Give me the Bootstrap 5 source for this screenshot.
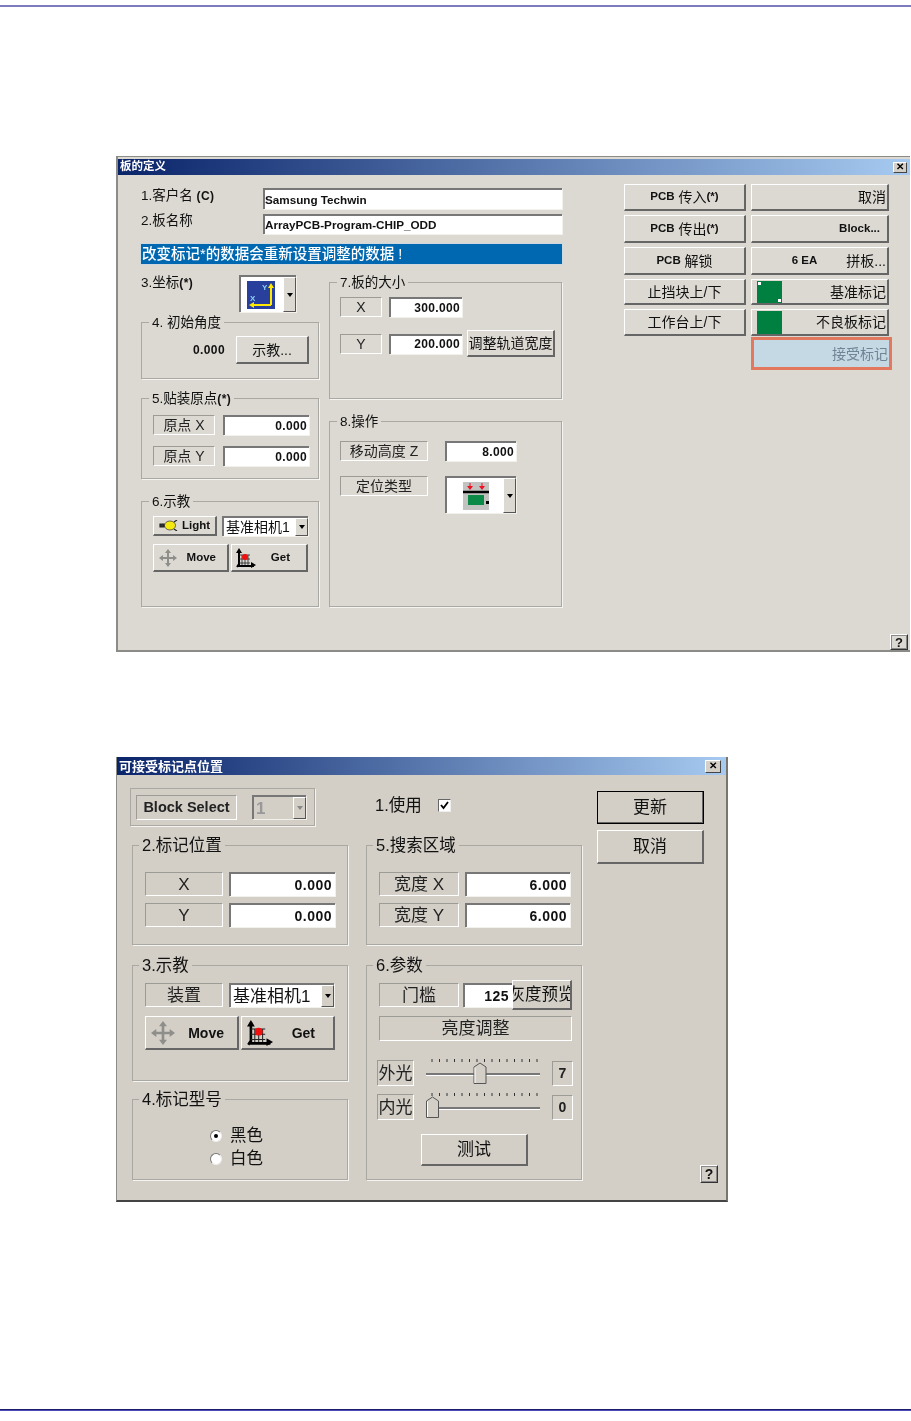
<!DOCTYPE html>
<html lang="zh"><head><meta charset="utf-8"><title>板的定义</title>
<link href="https://cdn.jsdelivr.net/npm/bootstrap@5.3.0/dist/css/bootstrap.min.css" rel="stylesheet">
<script src="https://cdn.jsdelivr.net/npm/bootstrap@5.3.0/dist/js/bootstrap.bundle.min.js"></script>
<style>
html,body{margin:0;background:#fff;overflow:hidden}
body{width:911px;height:1421px;font-family:"Liberation Sans","Noto Sans CJK SC",sans-serif;color:#111;font-size:13.5px;line-height:1}
.rule-top{height:2px;margin-top:5px;background:#7b7bbd}
.rule-bot{height:2px;margin-top:207px;background:linear-gradient(#1b1b6b 50%,#4b4bb5 50%)}
.dlg{margin-left:116px;box-sizing:border-box;filter:blur(.35px);position:relative}
.d1{margin-top:149px;width:794px;height:496px;background:#dcd9d2;border:1px solid #8b8b88;border-left-width:2px;border-bottom-width:2px;padding-top:2px;border-right:0;--bg:#dcd9d2}
.d2{margin-top:105px;width:612px;height:445px;background:#d3cfc7;border-left:1px solid #8b8b88;border-right:2px solid #77766f;border-bottom:2px solid #444;--bg:#d3cfc7}
.ttl{height:16px;padding:0 2px;color:#fff;font-weight:700;font-size:11.5px;background:linear-gradient(90deg,#0a246a,#a6caf0);white-space:nowrap}
.d2 .ttl{height:18px;font-size:13px}
.xbtn{width:14px;height:11px;background:#d4d0c8;border:1px solid;border-color:#fff #444 #444 #fff;color:#000;font-size:10px;margin-right:1px}
.d2 .xbtn{width:16px;height:13px;margin-right:3px}
.gbx{position:relative;border:1px solid #a9a8a2;box-shadow:1px 1px 0 #f5f4f0;box-sizing:border-box}
.glg{position:absolute;left:7px;top:-9px;background:var(--bg);padding:0 3px;font-size:13.5px;white-space:nowrap;line-height:17px}
.d2 .glg{font-size:16.5px;top:-11px;line-height:20px;left:6px}
.lb3d{display:flex;align-items:center;justify-content:center;box-sizing:border-box;border:1px solid;border-color:#9c9b95 #fff #fff #9c9b95;white-space:nowrap;font-size:14px;color:#222}
.d2 .lb3d{font-size:17px}
.form-control.fld{box-sizing:border-box;padding:0 2px 1px;min-height:0;background:#fff;border-style:solid;border-width:2px 0 0 2px;border-color:#777;border-radius:0;font-size:12px;font-weight:700;color:#111;line-height:1;box-shadow:1px 1px 0 #f2f1ec;letter-spacing:.35px}
.form-control.fld.txt{font-size:11.7px;letter-spacing:0;padding-left:0}
.d2 .form-control.fld{font-size:14px;letter-spacing:.5px;padding-right:3px}
.btn.wbtn{display:flex;align-items:center;justify-content:center;box-sizing:border-box;padding:0;background:var(--bg);border-style:solid;border-width:1px 2px 2px 1px;border-color:#fff #666 #666 #fff;border-radius:0;color:#111;font-size:14px;line-height:1;white-space:nowrap;overflow:hidden}
.d2 .btn.wbtn{font-size:17px}
.btn.wbtn b{font-size:11.5px}
.d2 .btn.wbtn b{font-size:14px}
.btn.wbtn.r-al{justify-content:flex-end;padding-right:1px}
.btn.wbtn.r-b8{padding-right:7px}
.btn.wbtn.spread{justify-content:space-between}
.sp-a{padding:0 11px 0 5px!important}.sp-b{padding:0 16px 0 4px!important}.sp-c{padding:0 13px 0 5px!important}.sp-d{padding:0 18px 0 5px!important}
.gap31{margin-left:29px}
.cmb{display:flex;box-sizing:border-box;background:#fff;border-style:solid;border-width:2px 0 0 2px;border-color:#777;box-shadow:1px 1px 0 #f2f1ec;overflow:hidden}
.cmb .cv{flex:1;display:flex;align-items:center;padding-left:2px;white-space:nowrap;font-size:14px;overflow:hidden}
.cmb .cv.ico{padding-left:6px}
.d2 .cmb .cv{font-size:17px}
.arr{width:13px;background:var(--bg);border:1px solid;border-color:#fff #555 #555 #fff;display:flex;align-items:center;justify-content:center;flex:none}
.arr::after{content:"";border:3.5px solid transparent;border-top:4px solid #000;border-bottom:0}
.dis .arr::after{border-top-color:#888}
.dis{background:var(--bg)}
.dis .cv{color:#999;font-weight:700}
/* sizes */
.pl23{padding-left:23px}.pw421{width:421px}.pt13{padding-top:13px}.pt9{padding-top:9px}.ml62{margin-left:62px}.pt1x{padding-top:1px}
.lab1{width:122px;flex:none;font-size:13.5px}
.h21{height:21px}.h20{height:20px}.h24{height:24px}.h25{height:25px}.h27{height:27px}.h28{height:28px}.h30{height:30px}.h34{height:34px}.h37{height:37px}
.mt5{margin-top:5px}.mt7{margin-top:7px}.mt8{margin-top:8px}.mt9{margin-top:9px}.mt10{margin-top:10px}.mt11{margin-top:11px}.mt13{margin-top:13px}.mt15{margin-top:15px}.mt16{margin-top:16px}.mt18{margin-top:18px}.mt19{margin-top:19px}.mt20{margin-top:20px}.mt22{margin-top:22px}.mt6{margin-top:6px}
.banner{height:20px;background:#0068b0;color:#fff;font-size:14.5px;font-weight:500;padding-left:1px;display:flex;align-items:center;box-shadow:0 0 0 1px #cfd8dd}
.gL{width:178px}.gR{width:233px}.gap10{gap:10px}
.co1{width:98px}.cmb57{width:57px}
.g4{height:57px;padding:13px 9px 0 0}.g7{height:117px;padding:14px 0 0 10px}.g5{height:81px;padding:16px 0 0 11px}.g6{height:106px;padding:14px 0 0 11px}.g8{height:186px;padding:19px 0 0 10px}
.w42{width:42px}.w73{width:73px}.w88{width:88px}.w62{width:62px}.w86{width:86px}.w64{width:64px}.w76{width:76px}.w77{width:77px}.w71{width:71px}.g7px{gap:7px}.g8px{gap:8px}.g5px{gap:5px}.g17px{gap:17px}.g2px{gap:2px}.g11px{gap:11px}
.boldn{font-size:12px;font-weight:700;letter-spacing:.4px}
.rgrid{display:grid;grid-template-columns:122px 138px;grid-template-rows:27px 28px 28px 26px 27px 33px;gap:4px 5px}
.grn{width:25px;align-self:stretch;background:#008040;position:relative;flex:none;margin:1px auto 0 5px}
.grn.dots::before,.grn.dots::after{content:"";position:absolute;width:3px;height:3px;background:#fff}
.grn.dots::before{left:1px;top:1px}.grn.dots::after{right:1px;bottom:1px}
.btn.wbtn.acc{margin-top:-3px;width:141px;background:#c5d9e5;border:3px solid #e2795f;color:#6f8494;height:33px}
.helpr{margin-top:27px}
.btn.wbtn.help{width:18px;height:16px;font-size:13px;font-weight:700;border:1px solid;border-color:#fff #333 #333 #fff;outline:1px solid #888;outline-offset:-2px}
.d2 .btn.wbtn.help{font-size:14px;height:18px}
.pr0{margin-right:2px}
/* dialog 2 */
.a-col{width:216px;margin-left:15px}.b-col{width:216px;margin-left:18px}.c-col{width:107px;margin-left:15px}
.blk{width:185px;height:38px;margin-left:-2px;padding:6px 0 0 5px}
.blk .lb3d{width:101px;height:25px;font-size:14.5px;font-weight:700}
.cmb54{width:54px;height:24px;margin-left:15px}
.use{height:38px;padding-left:9px;font-size:16.5px;gap:16px;padding-bottom:4px}
.chk{width:13px;height:13px;background:#fff;border:1px solid;border-color:#666 #eee #eee #666;display:block;flex:none}
.g2b{height:100px;padding:26px 0 0 12px}.g5b{height:100px;padding:26px 0 0 12px}.g3b{height:116px;padding:17px 0 0 12px}.g4b{height:81px;padding:24px 0 0 77px}.g6b{height:215px;padding:14px 0 0 12px}
.w78{width:78px}.w106{width:106px}.w80{width:80px}.w105{width:105px}.w94{width:94px}.w49{width:49px}.w60{width:60px}.w193{width:193px}.w37{width:37px}.w21{width:21px}.w107{width:107px}.g6px{gap:6px}.g12px{gap:12px}
.shl{margin-left:-2px}
.rad{width:12px;height:12px;border-radius:50%;background:#fff;border:1px solid;border-color:#777 #eee #eee #777;display:flex;align-items:center;justify-content:center;flex:none}
.rad.on::after{content:"";width:4px;height:4px;border-radius:50%;background:#000}
.rrow{height:23px;font-size:16.5px;gap:8px}
.tst{margin-left:42px;height:32px}
.btn.wbtn.dflt{outline:1px solid #000;outline-offset:-1px;height:33px}
.h33{height:33px}.h26{height:26px}
.hp{margin-top:301px;margin-left:103px}
.over span{flex:none;font-size:16.5px}
.d2 .val{font-size:14px;font-weight:700}
svg{display:block;flex:none}
</style></head><body>
<div class="rule-top"></div>

<section class="dlg d1">
  <div class="ttl d-flex align-items-center justify-content-between"><span>板的定义</span><span class="xbtn d-flex align-items-center justify-content-center">✕</span></div>
  <div class="d-flex">
    <div class="pl23">
      <div class="pw421 pt13">
        <div class="d-flex"><div class="lab1 pt1x">1.客户名 <b class="boldn">(C)</b></div><input class="form-control fld txt h21 flex-fill" readonly value="Samsung Techwin"></div>
        <div class="d-flex mt5"><div class="lab1">2.板名称</div><input class="form-control fld txt h20 flex-fill" readonly value="ArrayPCB-Program-CHIP_ODD"></div>
        <div class="banner mt10">改变标记*的数据会重新设置调整的数据 !</div>
        <div class="d-flex gap10 mt11">
          <div class="gL">
            <div class="d-flex h37"><div class="co1 pt1x">3.坐标<b class="boldn">(*)</b></div>
              <div class="cmb cmb57 h37"><div class="cv ico">
                <svg width="28" height="28" viewBox="0 0 28 28"><rect width="28" height="28" fill="#283f9c"/><path d="M24 24V4M24 24H4" stroke="#ffe900" stroke-width="2" fill="none"/><path d="M24 2l-3 5h6zM2 24l5-3v6z" fill="#ffe900"/><text x="3" y="20" font-size="8" font-weight="700" fill="#8fd0f0" font-family="Liberation Sans">X</text><text x="15" y="9" font-size="8" font-weight="700" fill="#8fd0f0" font-family="Liberation Sans">Y</text></svg>
              </div><div class="arr"></div></div></div>
            <div class="gbx g4 mt10 d-flex justify-content-end align-items-start g11px"><span class="glg">4. 初始角度</span><span class="boldn h28 d-flex align-items-center">0.000</span><button class="btn wbtn w73 h28">示教...</button></div>
            <div class="gbx g5 mt19"><span class="glg">5.贴装原点<b class="boldn">(*)</b></span>
              <div class="d-flex g8px"><div class="lb3d w62 h20">原点 X</div><input class="form-control fld w86 h20 text-end" readonly value="0.000"></div>
              <div class="d-flex g8px mt11"><div class="lb3d w62 h20">原点 Y</div><input class="form-control fld w86 h20 text-end" readonly value="0.000"></div>
            </div>
            <div class="gbx g6 mt22"><span class="glg">6.示教</span>
              <div class="d-flex g5px">
                <button class="btn wbtn w64 h20 gap-1"><svg width="19" height="11" viewBox="0 0 19 11"><ellipse cx="11" cy="5.500" rx="5.500" ry="4.500" fill="#f4ea10" stroke="#333" stroke-width=".7"/><path d="M1 4h4v3H1zM15 2l3-2M15 9l3 2" stroke="#222" stroke-width="1.200" fill="#333"/></svg><b>Light</b></button>
                <div class="cmb w86 h20"><div class="cv">基准相机1</div><div class="arr"></div></div>
              </div>
              <div class="d-flex g2px mt8">
                <button class="btn wbtn w76 h28 spread sp-a"><svg width="18" height="18" viewBox="0 0 18 18"><path d="M9 0l3 4h-2v4h4V6l4 3-4 3v-2h-4v4h2l-3 4-3-4h2v-4H4v2L0 9l4-3v2h4V4H6z" fill="#8e8e8a"/></svg><b>Move</b></button>
                <button class="btn wbtn w77 h28 spread sp-b"><svg width="20" height="20" viewBox="0 0 20 20"><path d="M3 2v15M1 18h17M3 16l-2 3" stroke="#000" stroke-width="2" fill="none"/><path d="M3 0L0 5h6zM20 17l-5-3v6z"/><path d="M3 7h11M3 11h11M3 15h11M6 7v10M9 7v10M12 7v10" stroke="#222" stroke-width=".8"/><circle cx="9" cy="9" r="3" fill="#f01010"/></svg><b>Get</b></button>
              </div>
            </div>
          </div>
          <div class="gR mt7">
            <div class="gbx g7"><span class="glg">7.板的大小</span>
              <div class="d-flex g7px"><div class="lb3d w42 h20">X</div><input class="form-control fld w73 h20 text-end" readonly value="300.000"></div>
              <div class="d-flex align-items-center g5px mt13"><div class="d-flex g7px"><div class="lb3d w42 h20">Y</div><input class="form-control fld w73 h20 text-end" readonly value="200.000"></div><button class="btn wbtn w88 h27">调整轨道宽度</button></div>
            </div>
            <div class="gbx g8 mt22"><span class="glg">8.操作</span>
              <div class="d-flex g17px"><div class="lb3d w88 h20">移动高度 Z</div><input class="form-control fld w71 h20 text-end" readonly value="8.000"></div>
              <div class="d-flex g17px mt15 align-items-start"><div class="lb3d w88 h20">定位类型</div>
                <div class="cmb w71 h37"><div class="cv justify-content-center">
                  <svg width="26" height="28" viewBox="0 0 26 28"><rect width="26" height="28" fill="#c2c2c0"/><path d="M0 10h26" stroke="#000" stroke-width="2.500"/><rect x="5" y="13" width="16" height="10" fill="#0a8a46"/><rect x="23" y="19" width="3" height="3"/><path d="M7 1v5M19 1v5" stroke="#f01020"/><path d="M4 4l3 4 3-4zM16 4l3 4 3-4z" fill="#f01020"/></svg>
                </div><div class="arr"></div></div>
              </div>
            </div>
          </div>
        </div>
      </div>
    </div>
    <div class="ml62 pt9">
      <div class="rgrid">
        <button class="btn wbtn"><b>PCB</b>&nbsp;传入<b>(*)</b></button><button class="btn wbtn r-al">取消</button>
        <button class="btn wbtn"><b>PCB</b>&nbsp;传出<b>(*)</b></button><button class="btn wbtn r-al r-b8"><b>Block...</b></button>
        <button class="btn wbtn"><b>PCB</b>&nbsp;解锁</button><button class="btn wbtn r-al"><b>6 EA</b><span class="gap31">拼板...</span></button>
        <button class="btn wbtn">止挡块上/下</button><button class="btn wbtn r-al"><span class="grn dots"></span>基准标记</button>
        <button class="btn wbtn">工作台上/下</button><button class="btn wbtn r-al"><span class="grn"></span>不良板标记</button>
        <span></span><button class="btn wbtn r-al acc">接受标记</button>
      </div>
    </div>
  </div>
  <div class="d-flex justify-content-end helpr pr0"><button class="btn wbtn help">?</button></div>
</section>

<section class="dlg d2">
  <div class="ttl d-flex align-items-center justify-content-between"><span>可接受标记点位置</span><span class="xbtn d-flex align-items-center justify-content-center">✕</span></div>
  <div class="d-flex">
    <div class="a-col mt13">
      <div class="gbx blk d-flex"><div class="lb3d">Block Select</div><div class="cmb cmb54 dis"><div class="cv">1</div><div class="arr"></div></div></div>
      <div class="gbx g2b mt19"><span class="glg">2.标记位置</span>
        <div class="d-flex g6px"><div class="lb3d w78 h24">X</div><input class="form-control fld w106 h24 text-end" readonly value="0.000"></div>
        <div class="d-flex g6px mt7"><div class="lb3d w78 h24">Y</div><input class="form-control fld w106 h24 text-end" readonly value="0.000"></div>
      </div>
      <div class="gbx g3b mt20"><span class="glg">3.示教</span>
        <div class="d-flex g6px"><div class="lb3d w78 h24">装置</div><div class="cmb w105 h24"><div class="cv">基准相机1</div><div class="arr"></div></div></div>
        <div class="d-flex g2px mt9">
          <button class="btn wbtn w94 h34 spread sp-c"><svg width="24" height="24" viewBox="0 0 18 18"><path d="M9 0l3 4h-2v4h4V6l4 3-4 3v-2h-4v4h2l-3 4-3-4h2v-4H4v2L0 9l4-3v2h4V4H6z" fill="#8e8e8a"/></svg><b>Move</b></button>
          <button class="btn wbtn w94 h34 spread sp-d"><svg width="26" height="26" viewBox="0 0 20 20"><path d="M3 2v15M1 18h17M3 16l-2 3" stroke="#000" stroke-width="2" fill="none"/><path d="M3 0L0 5h6zM20 17l-5-3v6z"/><path d="M3 7h11M3 11h11M3 15h11M6 7v10M9 7v10M12 7v10" stroke="#222" stroke-width=".8"/><circle cx="9" cy="9" r="3" fill="#f01010"/></svg><b>Get</b></button>
        </div>
      </div>
      <div class="gbx g4b mt18"><span class="glg">4.标记型号</span>
        <div class="d-flex align-items-center rrow"><span class="rad on"></span>黑色</div>
        <div class="d-flex align-items-center rrow"><span class="rad"></span>白色</div>
      </div>
    </div>
    <div class="b-col mt13">
      <div class="d-flex align-items-center use"><span>1.使用</span><span class="chk"><svg width="11" height="11" viewBox="0 0 11 11"><path d="M2 5l2.500 3L9 2" stroke="#000" stroke-width="1.800" fill="none"/></svg></span></div>
      <div class="gbx g5b mt19"><span class="glg">5.搜索区域</span>
        <div class="d-flex g6px"><div class="lb3d w80 h24">宽度 X</div><input class="form-control fld w105 h24 text-end" readonly value="6.000"></div>
        <div class="d-flex g6px mt7"><div class="lb3d w80 h24">宽度 Y</div><input class="form-control fld w105 h24 text-end" readonly value="6.000"></div>
      </div>
      <div class="gbx g6b mt20"><span class="glg">6.参数</span>
        <div class="d-flex align-items-center">
          <div class="lb3d w80 h24">门槛</div><input class="form-control fld w49 h24 text-end ms-1" readonly value="125"><button class="btn wbtn w60 h30 over"><span>灰度预览</span></button>
        </div>
        <div class="lb3d w193 h25 mt6">亮度调整</div>
        <div class="d-flex align-items-center shl mt18 g12px">
          <div class="lb3d w37 h26">外光</div>
          <svg width="114" height="28" viewBox="0 0 114 28"><path d="M6 0v3M13.500 0v3M21 0v3M28.500 0v3M36 0v3M43.500 0v3M51 0v3M58.500 0v3M66 0v3M73.500 0v3M81 0v3M88.500 0v3M96 0v3M103.500 0v3M111 0v3" stroke="#333"/><rect x="0" y="14" width="114" height="2" fill="#777"/><rect x="0" y="16" width="114" height="1" fill="#fff"/><path d="M48 24.500V8l6-4 6 4v16.500z" fill="#d3cfc7" stroke="#555"/><path d="M49 24V8.500" stroke="#fff"/></svg>
          <div class="lb3d w21 h25 val">7</div>
        </div>
        <div class="d-flex align-items-center shl mt6 g12px">
          <div class="lb3d w37 h26">内光</div>
          <svg width="114" height="28" viewBox="0 0 114 28"><path d="M6 0v3M13.500 0v3M21 0v3M28.500 0v3M36 0v3M43.500 0v3M51 0v3M58.500 0v3M66 0v3M73.500 0v3M81 0v3M88.500 0v3M96 0v3M103.500 0v3M111 0v3" stroke="#333"/><rect x="0" y="14" width="114" height="2" fill="#777"/><rect x="0" y="16" width="114" height="1" fill="#fff"/><path d="M.5 24.500V8l6-4 6 4v16.500z" fill="#d3cfc7" stroke="#555"/><path d="M1.500 24V8.500" stroke="#fff"/></svg>
          <div class="lb3d w21 h25 val">0</div>
        </div>
        <button class="btn wbtn w107 tst mt13">测试</button>
      </div>
    </div>
    <div class="c-col mt16">
      <button class="btn wbtn dflt w107 h33">更新</button>
      <button class="btn wbtn w107 h34 mt6">取消</button>
      <button class="btn wbtn help hp">?</button>
    </div>
  </div>
</section>

<div class="rule-bot"></div>
</body></html>
